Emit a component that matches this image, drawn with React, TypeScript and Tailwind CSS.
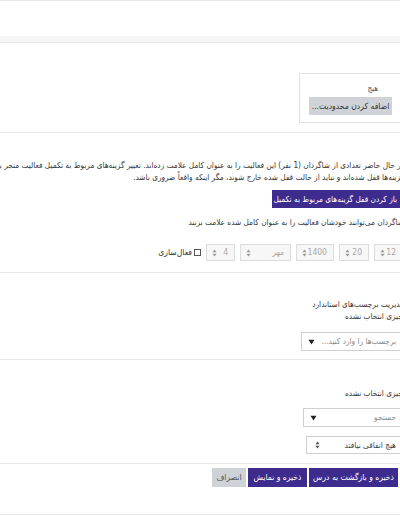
import React from "react";

const font = { fontFamily: '"DejaVu Sans Condensed", "DejaVu Sans", sans-serif' };

function UpDown({ color = "#9a9a9a" }: { color?: string }) {
  return (
    <svg width="5" height="8" viewBox="0 0 5 8" className="shrink-0">
      <path d="M2.5 0.5 L4.6 3.2 L0.4 3.2 Z" fill={color} />
      <path d="M2.5 7.5 L4.6 4.8 L0.4 4.8 Z" fill={color} />
    </svg>
  );
}

function Down() {
  return (
    <svg width="7" height="6" viewBox="0 0 7 6" className="shrink-0">
      <path d="M0.5 0.8 L6.5 0.8 L3.5 5.5 Z" fill="#222" />
    </svg>
  );
}

function DateBox({ value, width }: { value: string; width: string }) {
  return (
    <div
      className={`${width} h-[17px] flex items-center justify-between pr-[6px] pl-[5px] border border-[#dcdcdc] bg-[#f7f7f7] text-[8.5px] text-[#a8a8a8]`}
    >
      <span>{value}</span>
      <UpDown />
    </div>
  );
}

function Rule() {
  return <div className="h-px bg-[#e8e8e8] w-[406px]" />;
}

export default function App() {
  return (
    <div className="w-[400px] h-[516px] overflow-hidden bg-white" style={font}>
      <div dir="rtl" className="w-[406px] text-[#383838]">
        <div className="h-px bg-[#e6e6e6]" />
        <div className="h-[35px]" />
        <div className="h-[7px] bg-[#f6f6f6] border-b border-[#ebebeb]" />

        {/* restrictions box */}
        <div className="h-[30px]" />
        <div className="mr-[4px] w-[103px] h-[50px] border border-[#e2e2e2] px-[9px] pt-[9px]">
          <div className="mr-[14px] text-[8px] leading-[12px] text-[#555]">هیچ</div>
          <div className="mt-[2px] h-[18px] w-[83px] bg-[#cfd3d8] text-[8.5px] text-[#333] flex items-center justify-center whitespace-nowrap">
            اضافه کردن محدودیت...
          </div>
        </div>

        <div className="h-[9px]" />
        <Rule />

        {/* completion lock */}
        <div className="h-[26px]" />
        <div className="mr-[2px] text-[8.2px] leading-[12px] whitespace-nowrap">
          <div>
            در حال حاضر تعدادی از شاگردان (1 نفر) این فعالیت را به عنوان کامل علامت زده‌اند. تغییر گزینه‌های مربوط به تکمیل فعالیت منجر به پاک شدن وضعیت تکمیل آن‌ها می‌شود، بنابراین
          </div>
          <div>گزینه‌ها قفل شده‌اند و نباید از حالت قفل شده خارج شوند، مگر اینکه واقعاً ضروری باشد.</div>
        </div>
        <div className="mt-[7px] mr-[1px] w-[133px] h-[18px] bg-[#3d2b8e] text-white text-[8.2px] flex items-center justify-start pr-[8px] whitespace-nowrap">
          باز کردن قفل گزینه‌های مربوط به تکمیل
        </div>
        <div className="mt-[8px] mr-[2px] text-[8.2px] leading-[12px] whitespace-nowrap">
          شاگردان می‌توانند خودشان فعالیت را به عنوان کامل شده علامت بزنند
        </div>

        {/* date row */}
        <div className="mt-[16px] mr-[3px] flex items-center gap-[5px]">
          <DateBox value="12" width="w-[29px]" />
          <DateBox value="20" width="w-[30px]" />
          <DateBox value="1400" width="w-[38px]" />
          <DateBox value="مهر" width="w-[51px]" />
          <DateBox value="4" width="w-[29px]" />
          <label className="flex items-center gap-[2px] text-[8.5px] text-[#333]">
            <span className="w-[7px] h-[7px] border border-[#555] bg-white" />
            <span>فعال‌سازی</span>
          </label>
        </div>

        <div className="h-[11px]" />
        <Rule />

        {/* tags */}
        <div className="h-[25px]" />
        <div className="mr-[2px] text-[8.2px] leading-[12px] whitespace-nowrap">مدیریت برچسب‌های استاندارد</div>
        <div className="-mr-[10px] text-[8.2px] leading-[12px] whitespace-nowrap">هیچ چیزی انتخاب نشده</div>
        <div className="mt-[10px] mr-[-1px] w-[106px] h-[19px] border border-[#cfcfcf] flex items-center justify-between pr-[10px] pl-[6px]">
          <span className="text-[8.2px] text-[#8a8a8a] whitespace-nowrap">برچسب‌ها را وارد کنید...</span>
          <Down />
        </div>

        <div className="h-[8px]" />
        <Rule />

        {/* competencies */}
        <div className="h-[27px]" />
        <div className="-mr-[10px] text-[8.2px] leading-[12px] whitespace-nowrap">هیچ چیزی انتخاب نشده</div>
        <div className="mt-[9px] mr-[-1px] w-[104px] h-[19px] border border-[#cfcfcf] flex items-center justify-between pr-[10px] pl-[6px]">
          <span className="text-[8.2px] text-[#8a8a8a]">جستجو</span>
          <Down />
        </div>
        <div className="mt-[9px] mr-[-1px] w-[101px] h-[18px] border border-[#cfcfcf] flex items-center justify-between pr-[10px] pl-[8px]">
          <span className="text-[8.2px] text-[#444] whitespace-nowrap">هیچ اتفاقی نیافتد</span>
          <UpDown color="#555" />
        </div>

        <div className="h-[9px]" />
        <Rule />

        {/* action buttons */}
        <div className="mt-[4px] mr-[8px] flex gap-[2px] text-[8.5px] whitespace-nowrap">
          <div className="w-[89px] h-[19px] bg-[#3d2b8e] text-white flex items-center justify-center">ذخیره و بازگشت به درس</div>
          <div className="w-[59px] h-[19px] bg-[#3d2b8e] text-white flex items-center justify-center">ذخیره و نمایش</div>
          <div className="w-[34px] h-[19px] bg-[#cfd3d8] text-[#555] flex items-center justify-center">انصراف</div>
        </div>

        <div className="h-[27px]" />
        <Rule />
      </div>
    </div>
  );
}
